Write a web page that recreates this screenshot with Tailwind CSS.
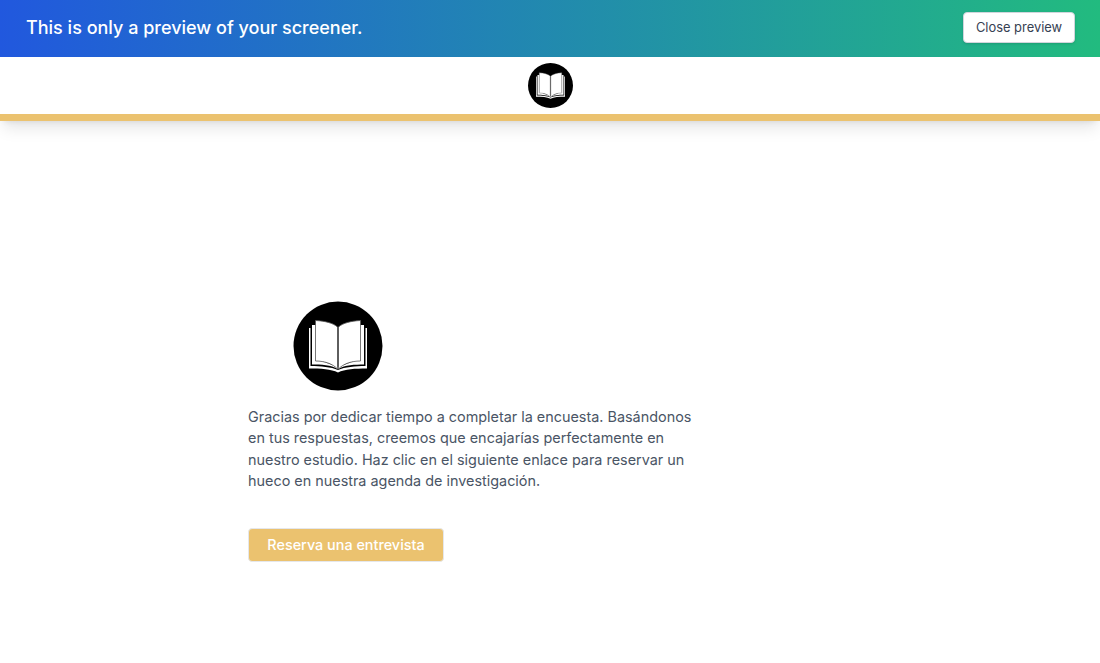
<!DOCTYPE html>
<html lang="es">
<head>
    <meta charset="UTF-8">
    <title>Screener preview</title>
    <script src="https://cdn.jsdelivr.net/npm/@tailwindcss/browser@4"></script>
</head>
<body class="bg-white font-['Inter',sans-serif] h-[663px] overflow-hidden">
    <div class="h-[57px] bg-[linear-gradient(to_right,#2158de,#22bb7f)] flex items-center justify-between pl-[26px] pr-[25px]">
        <span class="text-white text-[18px] font-medium mb-[2px]">This is only a preview of your screener.</span>
        <button class="w-[112px] h-[31px] mb-[2px] bg-white rounded border border-gray-300 text-[12.9px] text-gray-700 shadow-sm">Close preview</button>
    </div>

    <div class="h-[64px] bg-white border-b-[7px] border-[#ebc26f] shadow-lg flex items-center justify-center">
        <svg class="w-[45px] h-[45px]" viewBox="0 0 90 90">
            <circle cx="45" cy="45" r="45" fill="#000"/>
            <path d="M16 27V67.500C28 67.500 38 68 45 71.500C52 68 62 67.500 74 67.500V27Z" fill="#fff"/>
            <path d="M17.500 26V65C28 65 38 66 45 69C52 66 62 65 72.500 65V26Z" fill="#000"/>
            <path d="M19 24H23V58L45 66L67 58V24H71V63.500C62 63.500 52 64 45 68C38 64 28 63.500 19 63.500Z" fill="#fff"/>
            <path d="M22.500 19.500V60C32 60 40 63 44.500 68V26C40 22 32 20 22.500 19.500Z" fill="#fff" stroke="#555" stroke-width="0.8"/>
            <path d="M67.500 19.500V60C58 60 50 63 45.500 68V26C50 22 58 20 67.500 19.500Z" fill="#fff" stroke="#555" stroke-width="0.8"/>
        </svg>
    </div>

    <div class="w-[450px] ml-[248px] mt-[180px]">
        <svg class="w-[90px] h-[90px] ml-[45px]" viewBox="0 0 90 90">
            <circle cx="45" cy="45" r="44.500" fill="#000"/>
            <path d="M16 27V67.500C28 67.500 38 68 45 71.500C52 68 62 67.500 74 67.500V27Z" fill="#fff"/>
            <path d="M17.500 26V65C28 65 38 66 45 69C52 66 62 65 72.500 65V26Z" fill="#000"/>
            <path d="M19 24H23V58L45 66L67 58V24H71V63.500C62 63.500 52 64 45 68C38 64 28 63.500 19 63.500Z" fill="#fff"/>
            <path d="M22.500 19.500V60C32 60 40 63 44.500 68V26C40 22 32 20 22.500 19.500Z" fill="#fff" stroke="#555" stroke-width="0.8"/>
            <path d="M67.500 19.500V60C58 60 50 63 45.500 68V26C50 22 58 20 67.500 19.500Z" fill="#fff" stroke="#555" stroke-width="0.8"/>
        </svg>
        <p class="mt-[14.600px] text-[14.4px] leading-[21.5px] text-gray-600">Gracias por dedicar tiempo a completar la encuesta. Basándonos<br>en tus respuestas, creemos que encajarías perfectamente en<br>nuestro estudio. Haz clic en el siguiente enlace para reservar un<br>hueco en nuestra agenda de investigación.</p>
        <button class="mt-[36.400px] w-[196px] h-[34px] bg-[#ebc26f] rounded border border-gray-200 text-white text-[14.4px] font-medium">Reserva una entrevista</button>
    </div>
</body>
</html>
